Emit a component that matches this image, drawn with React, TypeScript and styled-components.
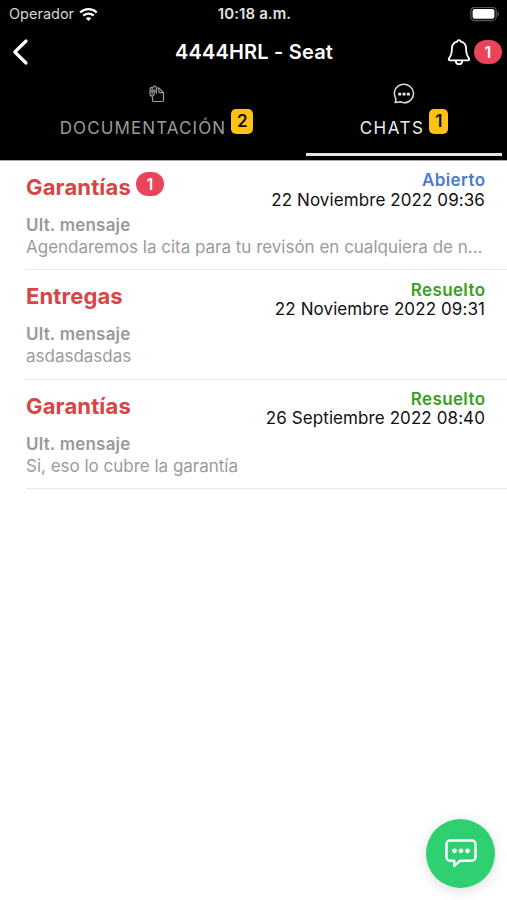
import React from 'react';
import styled, { createGlobalStyle } from 'styled-components';

const GlobalStyle = createGlobalStyle`
  *, *::before, *::after { box-sizing: border-box; }
  body {
    margin: 0;
    background: #fff;
    font-family: Inter, "Liberation Sans", sans-serif;
  }
  button { font: inherit; color: inherit; background: none; border: 0; padding: 0; }
  h1, h2, p { margin: 0; }
  svg { display: block; flex: none; }
`;

const Screen = styled.div`
  width: 507px;
  height: 900px;
  display: flex;
  flex-direction: column;
  position: relative;
  overflow: hidden;
  background: #fff;
`;

const Header = styled.header`
  height: 161px;
  flex: none;
  background: #000;
  color: #fff;
  border-bottom: 1px solid #a5a2a5;
`;

const StatusBar = styled.div`
  height: 28px;
  display: grid;
  grid-template-columns: 1fr auto 1fr;
  align-items: center;
  padding: 0 7px 0 9px;
`;

const Carrier = styled.div`
  display: flex;
  align-items: center;
  gap: 5px;
  font-size: 14.5px;
  line-height: 18px;
  letter-spacing: 0;
  color: #d6d6d6;
`;

const Clock = styled.div`
  font-size: 15px;
  line-height: 18px;
  font-weight: 600;
  letter-spacing: 0.1px;
  color: #e2e2e2;
`;

const StatusEnd = styled.div`
  display: flex;
  justify-content: flex-end;
`;

const NavBar = styled.nav`
  height: 48px;
  margin-bottom: 1px;
  display: grid;
  grid-template-columns: 1fr auto 1fr;
  align-items: center;
  padding: 0 5px 0 12px;
`;

const NavTitle = styled.h1`
  font-size: 20px;
  line-height: 24px;
  font-weight: 600;
  letter-spacing: 0.19px;
  transform: translateX(-3px);
`;

const BackButton = styled.button`
  width: 18px;
`;

const Alerts = styled.button`
  display: flex;
  justify-content: flex-end;
  align-items: center;
  gap: 3px;
`;

const CountPill = styled.span`
  width: 28px;
  height: 24px;
  flex: none;
  display: flex;
  align-items: center;
  justify-content: center;
  border-radius: 12px;
  background: #ea445a;
  color: #fff;
  font-size: 16px;
  line-height: 20px;
  font-weight: 600;
`;

const Tabs = styled.div`
  height: 83px;
  display: grid;
  grid-template-columns: 306px 196px;
`;

const Tab = styled.button<{ $active?: boolean }>`
  height: 79px;
  display: flex;
  flex-direction: column;
  align-items: center;
  padding-top: 6px;
  color: ${(p) => (p.$active ? '#ececec' : '#9b9b9b')};
  border-bottom: 3px solid ${(p) => (p.$active ? '#e4e4e4' : 'transparent')};
`;

const TabIcon = styled.span<{ $shift?: number }>`
  height: 22px;
  display: flex;
  align-items: center;
  margin-left: ${(p) => p.$shift ?? 0}px;
`;

const TabCaption = styled.span<{ $shift: number }>`
  display: flex;
  align-items: flex-start;
  padding-top: 4px;
  margin-left: ${(p) => p.$shift}px;
`;

const TabLabel = styled.span<{ $spacing: number }>`
  padding-top: 8px;
  font-size: 17px;
  line-height: 22px;
  letter-spacing: ${(p) => p.$spacing}px;
`;

const TabBadge = styled.span<{ $width: number }>`
  width: ${(p) => p.$width}px;
  height: 25px;
  margin-left: 5px;
  border-radius: 5px;
  background: #fdc310;
  color: #111;
  font-size: 17px;
  line-height: 25px;
  font-weight: 600;
  text-align: center;
`;

const ChatList = styled.main`
  padding-left: 26px;
`;

const ChatRow = styled.article`
  height: 109.3px;
  padding: 9px 22px 0 0;
  border-bottom: 1px solid #e9e9e9;
`;

const RowTop = styled.div`
  height: 44px;
  display: flex;
  justify-content: space-between;
`;

const Topic = styled.div`
  display: flex;
  align-items: flex-start;
  gap: 5px;
  padding-top: 2px;
`;

const TopicName = styled.h2`
  padding-top: 1px;
  font-size: 22px;
  line-height: 28px;
  font-weight: 700;
  letter-spacing: 0.15px;
  color: #d84545;
`;

const Meta = styled.div`
  padding-top: 1.4px;
  text-align: right;
  font-size: 17px;
  line-height: 19.5px;
`;

const Status = styled.p<{ $open?: boolean }>`
  font-weight: 600;
  letter-spacing: 0.38px;
  margin-right: -0.4px;
  color: ${(p) => (p.$open ? '#4b7bd0' : '#39a01f')};
`;

const DateText = styled.p`
  letter-spacing: 0.09px;
  color: #111;
`;

const LastLabel = styled.p`
  font-size: 17px;
  line-height: 22px;
  font-weight: 600;
  letter-spacing: 0.22px;
  color: #999;
`;

const LastMessage = styled.p`
  font-size: 17px;
  line-height: 22px;
  letter-spacing: -0.01px;
  color: #9b9b9b;
  white-space: nowrap;
`;

const ComposeButton = styled.button`
  position: absolute;
  right: 12px;
  bottom: 12px;
  width: 69px;
  height: 69px;
  display: flex;
  align-items: center;
  justify-content: center;
  border-radius: 50%;
  background: #2fd071;
  box-shadow: 0 3px 14px rgba(0, 0, 0, 0.13);
`;

const WifiIcon = () => (
  <svg width="19" height="15" viewBox="0 0 20 15" fill="none" stroke="#fff" strokeWidth="2.4">
    <path d="M1.3 5.4C6.2.8 13.8.8 18.7 5.4" />
    <path d="M4.5 8.7c3.1-2.9 7.9-2.9 11 0" />
    <path d="M10 14.4l-2.9-3c1.6-1.5 4.2-1.5 5.8 0z" fill="#fff" stroke="none" />
  </svg>
);

const BatteryIcon = () => (
  <svg width="30" height="15" viewBox="0 0 30 15">
    <rect x=".8" y=".3" width="25.4" height="13.2" rx="4" fill="none" stroke="#555" strokeWidth="1.3" />
    <rect x="2.6" y="2" width="21.8" height="9.8" rx="2.3" fill="#fff" />
    <path d="M27.6 4.500c1.600.600 1.600 4.400 0 5z" fill="#666" />
  </svg>
);

const BackIcon = () => (
  <svg width="17" height="28" viewBox="0 0 17 28" fill="none" stroke="#fff" strokeWidth="3.200" strokeLinecap="round" strokeLinejoin="round">
    <path d="M14 3L2.800 14 14 25" />
  </svg>
);

const BellIcon = () => (
  <svg width="24" height="28" viewBox="0 0 24 28" fill="none" stroke="#fff" strokeWidth="1.800" strokeLinejoin="round" strokeLinecap="round">
    <path d="M12 2.200c-1 0-1.700.600-1.900 1.500C6.700 4.500 4.900 7.200 4.900 10.800c0 5.700-1.200 7.400-2.800 9.300-.8 1-.3 2.200.9 2.200h18c1.200 0 1.700-1.200.9-2.200-1.600-1.900-2.800-3.600-2.800-9.300 0-3.600-1.800-6.300-5.200-7.100-.2-.9-.9-1.500-1.900-1.500z" />
    <path d="M8.700 22.600c.1 2.200 1.500 3.600 3.300 3.600s3.200-1.400 3.300-3.600" />
  </svg>
);

const DocumentIcon = () => (
  <svg width="18" height="18" viewBox="0 0 18 18" fill="none" stroke="#9d9d9d" strokeWidth="1.2" strokeLinejoin="round" strokeLinecap="round">
    <path d="M4.500 12v3.200c0 .8.500 1.300 1.300 1.300h8.400c.8 0 1.300-.5 1.300-1.300V7.700L10.800 3H8.900" />
    <path d="M10.800 3.200v3.300c0 .8.400 1.200 1.200 1.200h3.300" />
    <path d="M8.400 8.300V3.500c0-3-3.400-3-3.400-.8C3 1.700 1.800 3 2 5v4c0 2.700 4.200 2.700 4.200 0V4.600M4.100 3.500V9M2 6h6.400" />
  </svg>
);

const ChatIcon = () => (
  <svg width="22" height="22" viewBox="0 0 22 22" fill="none" stroke="#ddd" strokeWidth="1.5" strokeLinejoin="round">
    <path d="M2.700 15.300C.200 10.700 1.400 5.700 5 3.100c3.600-2.700 9-2.500 12.400.6 3.800 3.400 4.200 8.900.9 12.700-2.800 3.200-7.200 4-10.900 2.400-1.700.5-3.500.8-5.300.8.600-1.500 1-2.900.6-4.300z" />
    <path d="M5.300 9.700h2.900v2.700H5.300zM9.600 9.700h2.900v2.700H9.600zM13.900 9.700h2.900v2.700h-2.900z" fill="#eee" stroke="none" />
  </svg>
);

const MessageIcon = () => (
  <svg width="32" height="29" viewBox="0 0 32 29" fill="none" stroke="#fff" strokeWidth="2.400" strokeLinejoin="round">
    <path d="M5 1.500h22a3.500 3.500 0 0 1 3.500 3.500v13.200a3.500 3.500 0 0 1-3.500 3.500H15.200L9.300 26.800v-5.100H5a3.500 3.500 0 0 1-3.500-3.500V5A3.500 3.500 0 0 1 5 1.500z" />
    <g fill="#fff" stroke="none">
      <circle cx="9.500" cy="11.800" r="2.400" />
      <circle cx="16" cy="11.800" r="2.400" />
      <circle cx="22.500" cy="11.800" r="2.400" />
    </g>
  </svg>
);

interface Chat {
  topic: string;
  unread?: number;
  status: string;
  open?: boolean;
  date: string;
  message: string;
}

const chats: Chat[] = [
  {
    topic: 'Garantías',
    unread: 1,
    status: 'Abierto',
    open: true,
    date: '22 Noviembre 2022 09:36',
    message: 'Agendaremos la cita para tu revisón en cualquiera de n...',
  },
  { topic: 'Entregas', status: 'Resuelto', date: '22 Noviembre 2022 09:31', message: 'asdasdasdas' },
  { topic: 'Garantías', status: 'Resuelto', date: '26 Septiembre 2022 08:40', message: 'Si, eso lo cubre la garantía' },
];

export default function App() {
  return (
    <>
      <GlobalStyle />
      <Screen>
        <Header>
          <StatusBar>
            <Carrier>
              Operador <WifiIcon />
            </Carrier>
            <Clock>10:18 a.m.</Clock>
            <StatusEnd>
              <BatteryIcon />
            </StatusEnd>
          </StatusBar>
          <NavBar>
            <BackButton aria-label="Volver">
              <BackIcon />
            </BackButton>
            <NavTitle>4444HRL - Seat</NavTitle>
            <Alerts aria-label="Notificaciones">
              <BellIcon />
              <CountPill>1</CountPill>
            </Alerts>
          </NavBar>
          <Tabs>
            <Tab>
              <TabIcon $shift={7}>
                <DocumentIcon />
              </TabIcon>
              <TabCaption $shift={7}>
                <TabLabel $spacing={1.1}>DOCUMENTACIÓN</TabLabel>
                <TabBadge $width={22}>2</TabBadge>
              </TabCaption>
            </Tab>
            <Tab $active>
              <TabIcon>
                <ChatIcon />
              </TabIcon>
              <TabCaption $shift={0}>
                <TabLabel $spacing={1.5}>CHATS</TabLabel>
                <TabBadge $width={19}>1</TabBadge>
              </TabCaption>
            </Tab>
          </Tabs>
        </Header>
        <ChatList>
          {chats.map((chat) => (
            <ChatRow key={chat.date}>
              <RowTop>
                <Topic>
                  <TopicName>{chat.topic}</TopicName>
                  {chat.unread && <CountPill>{chat.unread}</CountPill>}
                </Topic>
                <Meta>
                  <Status $open={chat.open}>{chat.status}</Status>
                  <DateText>{chat.date}</DateText>
                </Meta>
              </RowTop>
              <LastLabel>Ult. mensaje</LastLabel>
              <LastMessage>{chat.message}</LastMessage>
            </ChatRow>
          ))}
        </ChatList>
        <ComposeButton aria-label="Nuevo mensaje">
          <MessageIcon />
        </ComposeButton>
      </Screen>
    </>
  );
}
